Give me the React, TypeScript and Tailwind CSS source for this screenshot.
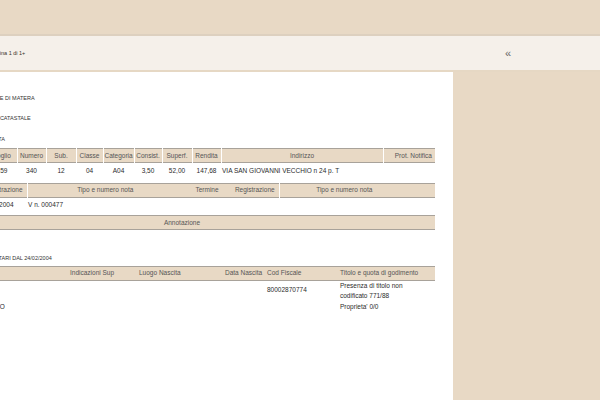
import React from "react";

const th =
  "h-[14px] p-0 px-px font-normal text-[#555] border-r border-white whitespace-nowrap overflow-hidden";
const td = "p-0 px-px whitespace-nowrap text-[#2b2b2b]";

function SectionTitle({ children, className }: { children: React.ReactNode; className?: string }) {
  return (
    <div className={`h-[12px] leading-[12px] text-[5.5px] uppercase text-[#333] whitespace-nowrap ${className ?? ""}`}>
      {children}
    </div>
  );
}

function ImmobileTable() {
  return (
    <table className="table-fixed border-collapse w-[506px] text-[6.5px]">
      <colgroup>
        <col className="w-[20px]" />
        <col className="w-[38px]" />
        <col className="w-[30px]" />
        <col className="w-[29px]" />
        <col className="w-[30px]" />
        <col className="w-[27px]" />
        <col className="w-[31px]" />
        <col className="w-[28px]" />
        <col className="w-[30px]" />
        <col className="w-[29px]" />
        <col className="w-[162px]" />
        <col className="w-[52px]" />
      </colgroup>
      <thead>
        <tr className="bg-[#e8d9c5] border-y border-[#a8a29a]">
          <th className={th}>N.</th>
          <th className={th}>Sez. Urb.</th>
          <th className={th}>Foglio</th>
          <th className={th}>Numero</th>
          <th className={th}>Sub.</th>
          <th className={th}>Classe</th>
          <th className={th}>Categoria</th>
          <th className={th}>Consist.</th>
          <th className={th}>Superf.</th>
          <th className={th}>Rendita</th>
          <th className={th}>Indirizzo</th>
          <th className={`${th} text-right pr-[3px] border-r-0`}>Prot. Notifica</th>
        </tr>
      </thead>
      <tbody>
        <tr className="h-[16px] text-center">
          <td className={td}>1</td>
          <td className={td}></td>
          <td className={td}>159</td>
          <td className={td}>340</td>
          <td className={td}>12</td>
          <td className={td}>04</td>
          <td className={td}>A04</td>
          <td className={td}>3,50</td>
          <td className={td}>52,00</td>
          <td className={td}>147,68</td>
          <td className={`${td} text-left`}>VIA SAN GIOVANNI VECCHIO n 24 p. T</td>
          <td className={td}></td>
        </tr>
      </tbody>
    </table>
  );
}

function NoteTable() {
  return (
    <table className="table-fixed border-collapse w-[506px] text-[6.5px] mt-[4px]">
      <colgroup>
        <col className="w-[46px]" />
        <col className="w-[52px]" />
        <col className="w-[156px]" />
        <col className="w-[48px]" />
        <col className="w-[48px]" />
        <col className="w-[130px]" />
        <col className="w-[26px]" />
      </colgroup>
      <thead>
        <tr className="bg-[#e8d9c5] border-y border-[#a8a29a]">
          <th className={th}>Situazione</th>
          <th className={`${th} text-right pr-[4px]`}>Registrazione</th>
          <th className={`${th} border-r-0`}>Tipo e numero nota</th>
          <th className={`${th} border-r-0`}>Termine</th>
          <th className={th}>Registrazione</th>
          <th className={`${th} border-r-0`}>Tipo e numero nota</th>
          <th className={`${th} border-r-0`}></th>
        </tr>
      </thead>
      <tbody>
        <tr className="h-[16px]">
          <td className={td}></td>
          <td className={`${td} text-left pl-[6px]`}>24/02/2004</td>
          <td className={`${td} text-left`}>V n. 000477</td>
          <td className={td}></td>
          <td className={td}></td>
          <td className={td}></td>
          <td className={td}></td>
        </tr>
      </tbody>
    </table>
  );
}

function AnnotationTable() {
  return (
    <table className="table-fixed border-collapse w-[506px] text-[6.5px] mt-[2px]">
      <thead>
        <tr className="bg-[#e8d9c5] border-y border-[#a8a29a]">
          <th className={`${th} border-r-0`}>Annotazione</th>
        </tr>
      </thead>
      <tbody>
        <tr className="h-[16px]">
          <td className={td}></td>
        </tr>
      </tbody>
    </table>
  );
}

function IntestatariTable() {
  const lth = `${th} text-left border-r-0`;
  return (
    <table className="table-fixed border-collapse w-[506px] text-[6.5px] mt-[2px]">
      <colgroup>
        <col className="w-[140px]" />
        <col className="w-[69px]" />
        <col className="w-[86px]" />
        <col className="w-[42px]" />
        <col className="w-[73px]" />
        <col className="w-[96px]" />
      </colgroup>
      <thead>
        <tr className="bg-[#e8d9c5] border-y border-[#a8a29a]">
          <th className={lth}>Nominativo</th>
          <th className={lth}>Indicazioni Sup</th>
          <th className={lth}>Luogo Nascita</th>
          <th className={lth}>Data Nascita</th>
          <th className={lth}>Cod Fiscale</th>
          <th className={lth}>Titolo e quota di godimento</th>
        </tr>
      </thead>
      <tbody className="align-top leading-[10px]">
        <tr>
          <td className={td}></td>
          <td className={td}></td>
          <td className={td}></td>
          <td className={td}></td>
          <td className={`${td} pt-[4px]`}>80002870774</td>
          <td className={`${td} whitespace-normal`}>
            Presenza di titolo non
            <br />
            codificato 771/88
          </td>
        </tr>
        <tr>
          <td className={`${td} pl-0 pt-px`}>DEMANIO DELLO STATO</td>
          <td className={td}></td>
          <td className={td}></td>
          <td className={td}></td>
          <td className={td}></td>
          <td className={`${td} pt-px`}>Proprieta' 0/0</td>
        </tr>
      </tbody>
    </table>
  );
}

export default function App() {
  return (
    <div
      className="w-[600px] h-[400px] bg-[#e8d9c5] flex flex-col overflow-hidden"
      style={{ fontFamily: '"Liberation Sans", Arial, sans-serif' }}
    >
      <div className="h-[34px] shrink-0" />
      <div className="h-[38px] shrink-0 bg-[#f5f0ea] border-t-2 border-[#ddd0bf] border-b-2 border-b-[#e6d8c4] flex items-center justify-between pr-[89px] overflow-hidden">
        <span className="-ml-[10px] text-[5.5px] font-medium text-[#3a3029] whitespace-nowrap">Pagina 1 di 1+</span>
        <span className="text-[11px] leading-none text-[#666]">«</span>
      </div>
      <div className="flex flex-1 min-h-0">
        <div className="w-[453px] bg-white overflow-hidden">
          <div className="-ml-[71px] w-[520px]">
            <SectionTitle className="mt-[20px] pl-[14px]">Ufficio Provinciale di Matera</SectionTitle>
            <SectionTitle className="mt-[8px] pl-[12px]">Prospetto partita catastale</SectionTitle>
            <SectionTitle className="mt-[9px]">Catasto fabbricati unita</SectionTitle>
            <div className="mt-[3px]">
              <ImmobileTable />
              <NoteTable />
              <AnnotationTable />
            </div>
            <SectionTitle className="mt-[6px] pl-[23px]">Elenco intestatari dal 24/02/2004</SectionTitle>
            <IntestatariTable />
          </div>
        </div>
        <div className="flex-1" />
      </div>
    </div>
  );
}
